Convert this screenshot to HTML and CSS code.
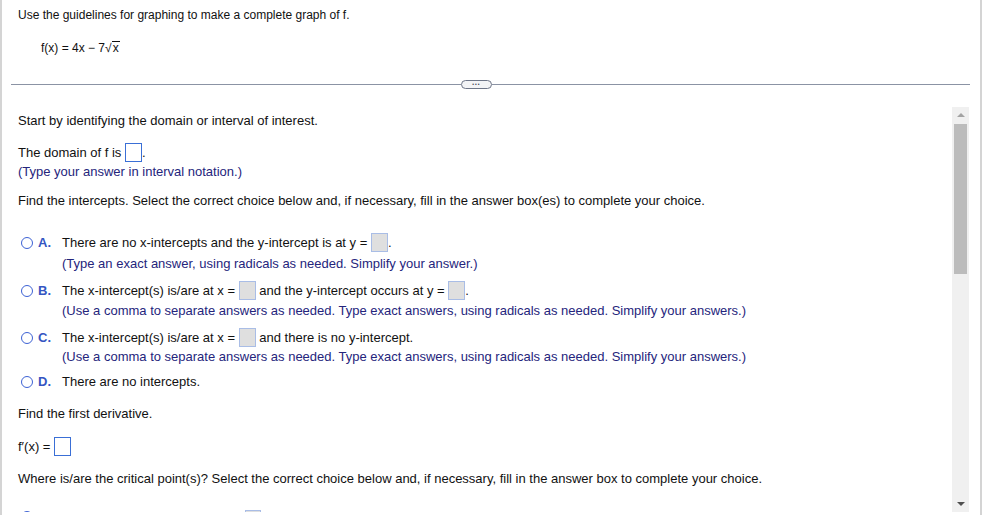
FILE: index.html
```html
<!DOCTYPE html>
<html>
<head>
<meta charset="utf-8">
<link rel="stylesheet" href="styles.css">
</head>
<body>
<div class="page">
  <div class="header">
    <div class="line">Use the guidelines for graphing to make a complete graph of f.</div>
    <div class="line formula">f(x) = 4x − 7<span class="rad"><span class="radsign">√</span><span class="radicand">x</span></span></div>
  </div>
  <div class="divider"><span class="rule left"></span><span class="more">•••</span><span class="rule"></span></div>
  <div class="scroll-area">
    <div class="content">
      <div class="line start">Start by identifying the domain or interval of interest.</div>
      <div class="boxline domain">The domain of f is <span class="box empty"></span>.</div>
      <div class="line hint h-domain">(Type your answer in interval notation.)</div>
      <div class="line find">Find the intercepts. Select the correct choice below and, if necessary, fill in the answer box(es) to complete your choice.</div>

      <div class="choice c-a">
        <span class="radio"></span><span class="letter">A.</span>
        <div class="body">
          <div class="boxline">There are no x-intercepts and the y-intercept is at y = <span class="box filled"></span>.</div>
          <div class="hint">(Type an exact answer, using radicals as needed. Simplify your answer.)</div>
        </div>
      </div>
      <div class="choice c-b">
        <span class="radio"></span><span class="letter">B.</span>
        <div class="body">
          <div class="boxline">The x-intercept(s) is/are at x = <span class="box filled"></span> and the y-intercept occurs at y = <span class="box filled"></span>.</div>
          <div class="hint">(Use a comma to separate answers as needed. Type exact answers, using radicals as needed. Simplify your answers.)</div>
        </div>
      </div>
      <div class="choice c-c">
        <span class="radio"></span><span class="letter">C.</span>
        <div class="body">
          <div class="boxline">The x-intercept(s) is/are at x = <span class="box filled"></span> and there is no y-intercept.</div>
          <div class="hint">(Use a comma to separate answers as needed. Type exact answers, using radicals as needed. Simplify your answers.)</div>
        </div>
      </div>
      <div class="choice c-d">
        <span class="radio"></span><span class="letter">D.</span>
        <div class="body">
          <div class="boxline">There are no intercepts.</div>
        </div>
      </div>

      <div class="line deriv">Find the first derivative.</div>
      <div class="boxline fprime">f′(x) = <span class="box empty"></span></div>
      <div class="line where">Where is/are the critical point(s)? Select the correct choice below and, if necessary, fill in the answer box to complete your choice.</div>
      <div class="choice c-next">
        <span class="radio"></span>
        <span class="next-gap"></span>
        <span class="box filled"></span>
      </div>
    </div>
    <div class="scrollbar">
      <div class="arrow up"></div>
      <div class="track"><div class="thumb"></div></div>
      <div class="arrow down"></div>
    </div>
  </div>
</div>
</body>
</html>
```

FILE: styles.css
```css
* { box-sizing: border-box; }
html, body { margin: 0; padding: 0; background: #fff; }
body {
  font-family: "Liberation Sans", Arial, sans-serif;
  font-size: 12px;
  color: #111;
}
.page {
  width: 982px;
  height: 515px;
  overflow: hidden;
  border-left: 2px solid #d4d4d4;
  border-right: 2px solid #d4d4d4;
}
.line { line-height: 16px; height: 16px; white-space: nowrap; }
.header { padding: 7px 0 0 16px; }
.formula { margin-top: 17px; padding-left: 23px; }
.rad { display: inline-block; }
.radicand { border-top: 1px solid #111; padding: 0 1px; line-height: 12px; display: inline-block; }

.divider {
  display: flex;
  align-items: center;
  margin: 24px 10px 0 9px;
  height: 9px;
}
.rule { flex: 1; height: 1px; background: #8b93a4; }
.rule.left { flex: none; width: 450px; }
.more {
  width: 31px;
  height: 9px;
  flex: none;
  border: 1px solid #6e7688;
  border-radius: 5px;
  background: #f3f4f6;
  color: #3d4452;
  font-size: 5px;
  line-height: 7px;
  text-align: center;
  letter-spacing: 1px;
}

.scroll-area {
  display: flex;
  margin-top: 18px;
  height: 405px;
}
.content {
  flex: 1;
  overflow: hidden;
  padding: 6px 0 0 16px;
  font-size: 13px;
}
.boxline { height: 20px; line-height: 20px; white-space: nowrap; }
.box { display: inline-block; width: 17px; height: 19px; vertical-align: middle; margin-top: -2px; }
.box.empty { background: #fff; border: 1px solid #3a6fd6; }
.box.filled { background: #dfdfdf; border: 1px solid #a9bde6; }
.hint { color: #25257c; line-height: 16px; height: 16px; white-space: nowrap; }

.domain { margin-top: 14px; }
.h-domain { margin-top: 1px; }
.find { margin-top: 13px; }

.choice { display: flex; align-items: flex-start; }
.radio {
  width: 12px; height: 12px;
  border: 1.5px solid #3d62d4;
  border-radius: 50%;
  margin: 4px 0 0 3px;
  flex: none;
}
.letter {
  width: 29px;
  padding-left: 5px;
  color: #3455c2;
  font-weight: bold;
  font-size: 13px;
  line-height: 20px;
  flex: none;
}
.body .hint { margin-top: 3px; }
.c-a { margin-top: 24px; }
.c-b { margin-top: 9px; }
.c-b .hint { margin-top: 2px; }
.c-c { margin-top: 9px; }
.c-c .hint { margin-top: 1px; }
.c-d { margin-top: 7px; }
.deriv { margin-top: 14px; }
.fprime { margin-top: 15px; }
.where { margin-top: 14px; }
.c-next { margin-top: 20px; }
.next-gap { width: 212px; flex: none; }
.c-next .box { margin-top: 3px; width: 16px; }

.scrollbar {
  width: 17px;
  flex: none;
  margin-right: 11px;
  background: #f0f0f0;
  display: flex;
  flex-direction: column;
  height: 405px;
}
.arrow { height: 17px; position: relative; flex: none; }
.arrow::after {
  content: "";
  position: absolute;
  left: 5px;
  width: 0; height: 0;
  border-left: 4px solid transparent;
  border-right: 4px solid transparent;
}
.arrow.up::after { top: 6px; border-bottom: 4px solid #a3a3a3; }
.arrow.down::after { top: 7px; border-top: 4px solid #505050; }
.track { flex: 1; padding: 0 2px; }
.thumb { height: 150px; background: #bcbcbc; }
```
